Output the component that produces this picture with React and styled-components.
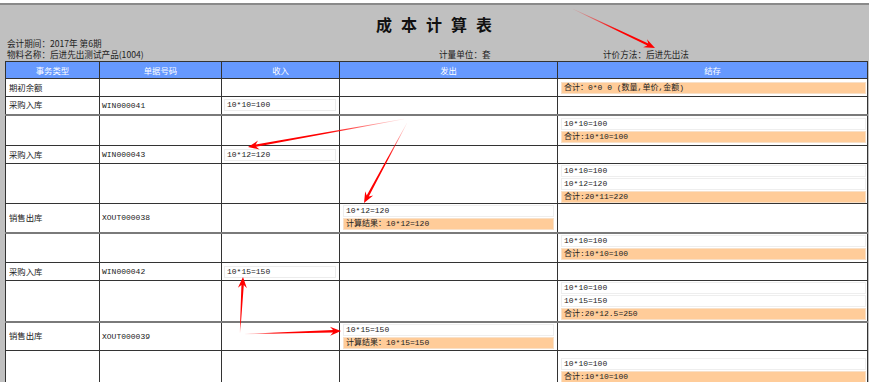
import React from 'react';
import styled, { createGlobalStyle } from 'styled-components';

const Global = createGlobalStyle`
  html, body { margin: 0; padding: 0; background: #fff; overflow: hidden; }
  body { font-family: "Liberation Mono", "Noto Sans CJK SC", monospace; color: #222; }
`;

const Page = styled.div`
  position: relative;
  width: 869px;
  height: 382px;
  overflow: hidden;
`;

const Sheet = styled.div`
  margin-top: 3px;
  border-top: 2px solid #8a8a8a;
  background: #c0c0c0;
  padding: 0 2px 0 5px;
  height: 400px;
`;

const Title = styled.div`
  padding-top: 6px;
  height: 27px;
  line-height: 27px;
  text-align: center;
  font-family: "Noto Sans CJK SC", sans-serif;
  font-weight: 700;
  font-size: 16px;
  letter-spacing: 9px;
  color: #111;
  padding-left: 5px;
`;

const InfoLine = styled.div`
  display: flex;
  height: 11px;
  line-height: 11px;
  font-size: 8.6px;
  font-family: "Noto Sans CJK SC", sans-serif;
  padding-left: 2px;
  color: #222;
`;

const InfoItem = styled.span`
  width: ${p => p.w ? `${p.w}px` : 'auto'};
  flex: none;
  white-space: nowrap;
`;

const Table = styled.table`
  border-collapse: collapse;
  table-layout: fixed;
  width: 862px;
  margin-top: 1px;
  background: #fff;
  font-size: 8px;
`;

const HeadRow = styled.tr`
  height: 17px;
  background: #6699ff;
`;

const Th = styled.th`
  border: 1px solid #333;
  color: #fff;
  font-weight: 400;
  font-family: "Noto Sans CJK SC", sans-serif;
  font-size: 8.4px;
  padding: 0;
  text-align: center;
  line-height: 14px;
`;

const Row = styled.tr`
  height: ${p => p.h}px;
`;

const Td = styled.td`
  border: 1px solid #333;
  border-top: ${p => p.thick ? '2px solid #7a7a7a' : '1px solid #333'};
  padding: 0 ${p => p.pr || 0}px 0 ${p => p.pl || 0}px;
  vertical-align: middle;
  white-space: nowrap;
  line-height: 11px;
`;

const TypeText = styled.span`
  font-family: "Noto Sans CJK SC", sans-serif;
  font-size: 8.4px;
`;

const InBox = styled.div`
  border: 1px solid #ececec;
  height: 10px;
  line-height: 10px;
  padding-left: 2px;
  background: #fff;
`;

const Stack = styled.div`
  display: flex;
  flex-direction: column;
  gap: 1px;
`;

const Line = styled.div`
  height: 10px;
  line-height: 10px;
  padding-left: 2px;
  border: 1px solid ${p => p.hi ? '#f8e0c8' : '#eeeeee'};
  background: ${p => p.hi ? '#ffcc99' : '#fff'};
  font-family: "Liberation Mono", "Noto Sans CJK SC", monospace;
`;

const Overlay = styled.svg`
  position: absolute;
  left: 0;
  top: 0;
  pointer-events: none;
`;

const rows = [
  { type: '期初余额', h: 18, stock: [{ t: '合计：0*0 0 (数量,单价,金额)', hi: true }] },
  { type: '采购入库', code: 'WIN000041', h: 18, inc: '10*10=100' },
  { h: 31, thick: true, stock: [{ t: '10*10=100' }, { t: '合计:10*10=100', hi: true }] },
  { type: '采购入库', code: 'WIN000043', h: 18, inc: '10*12=120' },
  { h: 40, stock: [{ t: '10*10=100' }, { t: '10*12=120' }, { t: '合计:20*11=220', hi: true }] },
  { type: '销售出库', code: 'XOUT000038', h: 29, out: [{ t: '10*12=120' }, { t: '计算结果：10*12=120', hi: true }] },
  { h: 30, thick: true, stock: [{ t: '10*10=100' }, { t: '合计:10*10=100', hi: true }] },
  { type: '采购入库', code: 'WIN000042', h: 18, inc: '10*15=150' },
  { h: 41, stock: [{ t: '10*10=100' }, { t: '10*15=150' }, { t: '合计:20*12.5=250', hi: true }] },
  { type: '销售出库', code: 'XOUT000039', h: 29, thick: true, out: [{ t: '10*15=150' }, { t: '计算结果：10*15=150', hi: true }] },
  { h: 40, stock: [{ t: '10*10=100' }, { t: '合计:10*10=100', hi: true }] },
];

function arrowPoints(x1, y1, x2, y2, head = 11, hw = 4.5, w0 = 0.4, w1 = 2.4) {
  const dx = x2 - x1, dy = y2 - y1;
  const L = Math.hypot(dx, dy);
  const ux = dx / L, uy = dy / L, nx = -uy, ny = ux;
  const bx = x2 - ux * head, by = y2 - uy * head;
  const nbx = x2 - ux * (head - 3), nby = y2 - uy * (head - 3);
  const pts = [
    [x1 + nx * w0 / 2, y1 + ny * w0 / 2],
    [nbx + nx * w1 / 2, nby + ny * w1 / 2],
    [bx + nx * hw, by + ny * hw],
    [x2, y2],
    [bx - nx * hw, by - ny * hw],
    [nbx - nx * w1 / 2, nby - ny * w1 / 2],
    [x1 - nx * w0 / 2, y1 - ny * w0 / 2],
  ];
  return pts.map(p => p.map(v => v.toFixed(1)).join(',')).join(' ');
}

const arrows = [
  { id: 'a1', x1: 573, y1: 9, x2: 655, y2: 48, fade: 0.55 },
  { id: 'a2', x1: 404, y1: 119, x2: 248, y2: 147, fade: 0.5 },
  { id: 'a3', x1: 407, y1: 123, x2: 364, y2: 203, fade: 0.45 },
  { id: 'a4', x1: 240, y1: 333, x2: 243, y2: 277, fade: 0.2 },
  { id: 'a5', x1: 245, y1: 334, x2: 341, y2: 331, fade: 0.3 },
];

function Arrows() {
  return (
    <Overlay width="869" height="382" viewBox="0 0 869 382">
      <defs>
        {arrows.map(a => (
          <linearGradient key={a.id} id={a.id} gradientUnits="userSpaceOnUse" x1={a.x1} y1={a.y1} x2={a.x2} y2={a.y2}>
            <stop offset="0" stopColor="#ff0000" stopOpacity="0.05" />
            <stop offset={a.fade} stopColor="#ff0000" stopOpacity="1" />
            <stop offset="1" stopColor="#ff0000" stopOpacity="1" />
          </linearGradient>
        ))}
      </defs>
      {arrows.map(a => (
        <polygon key={a.id} points={arrowPoints(a.x1, a.y1, a.x2, a.y2)} fill={`url(#${a.id})`} />
      ))}
    </Overlay>
  );
}

export default function App() {
  return (
    <Page>
      <Global />
      <Sheet>
        <Title>成本计算表</Title>
        <InfoLine>
          <InfoItem>会计期间：2017年 第6期</InfoItem>
        </InfoLine>
        <InfoLine>
          <InfoItem w={432}>物料名称：后进先出测试产品(1004)</InfoItem>
          <InfoItem w={164}>计量单位：套</InfoItem>
          <InfoItem>计价方法：后进先出法</InfoItem>
        </InfoLine>
        <Table>
          <colgroup>
            <col style={{ width: 94 }} />
            <col style={{ width: 122 }} />
            <col style={{ width: 118 }} />
            <col style={{ width: 218 }} />
            <col style={{ width: 310 }} />
          </colgroup>
          <thead>
            <HeadRow>
              <Th>事务类型</Th>
              <Th>单据号码</Th>
              <Th>收入</Th>
              <Th>发出</Th>
              <Th>结存</Th>
            </HeadRow>
          </thead>
          <tbody>
            {rows.map((r, i) => (
              <Row key={i} h={r.h}>
                <Td thick={r.thick} pl={3}>{r.type && <TypeText>{r.type}</TypeText>}</Td>
                <Td thick={r.thick} pl={2}>{r.code}</Td>
                <Td thick={r.thick} pl={2} pr={3}>{r.inc && <InBox>{r.inc}</InBox>}</Td>
                <Td thick={r.thick} pl={3} pr={3}>
                  {r.out && <Stack>{r.out.map((l, j) => <Line key={j} hi={l.hi}>{l.t}</Line>)}</Stack>}
                </Td>
                <Td thick={r.thick} pl={3} pr={1}>
                  {r.stock && <Stack>{r.stock.map((l, j) => <Line key={j} hi={l.hi}>{l.t}</Line>)}</Stack>}
                </Td>
              </Row>
            ))}
          </tbody>
        </Table>
      </Sheet>
      <Arrows />
    </Page>
  );
}
